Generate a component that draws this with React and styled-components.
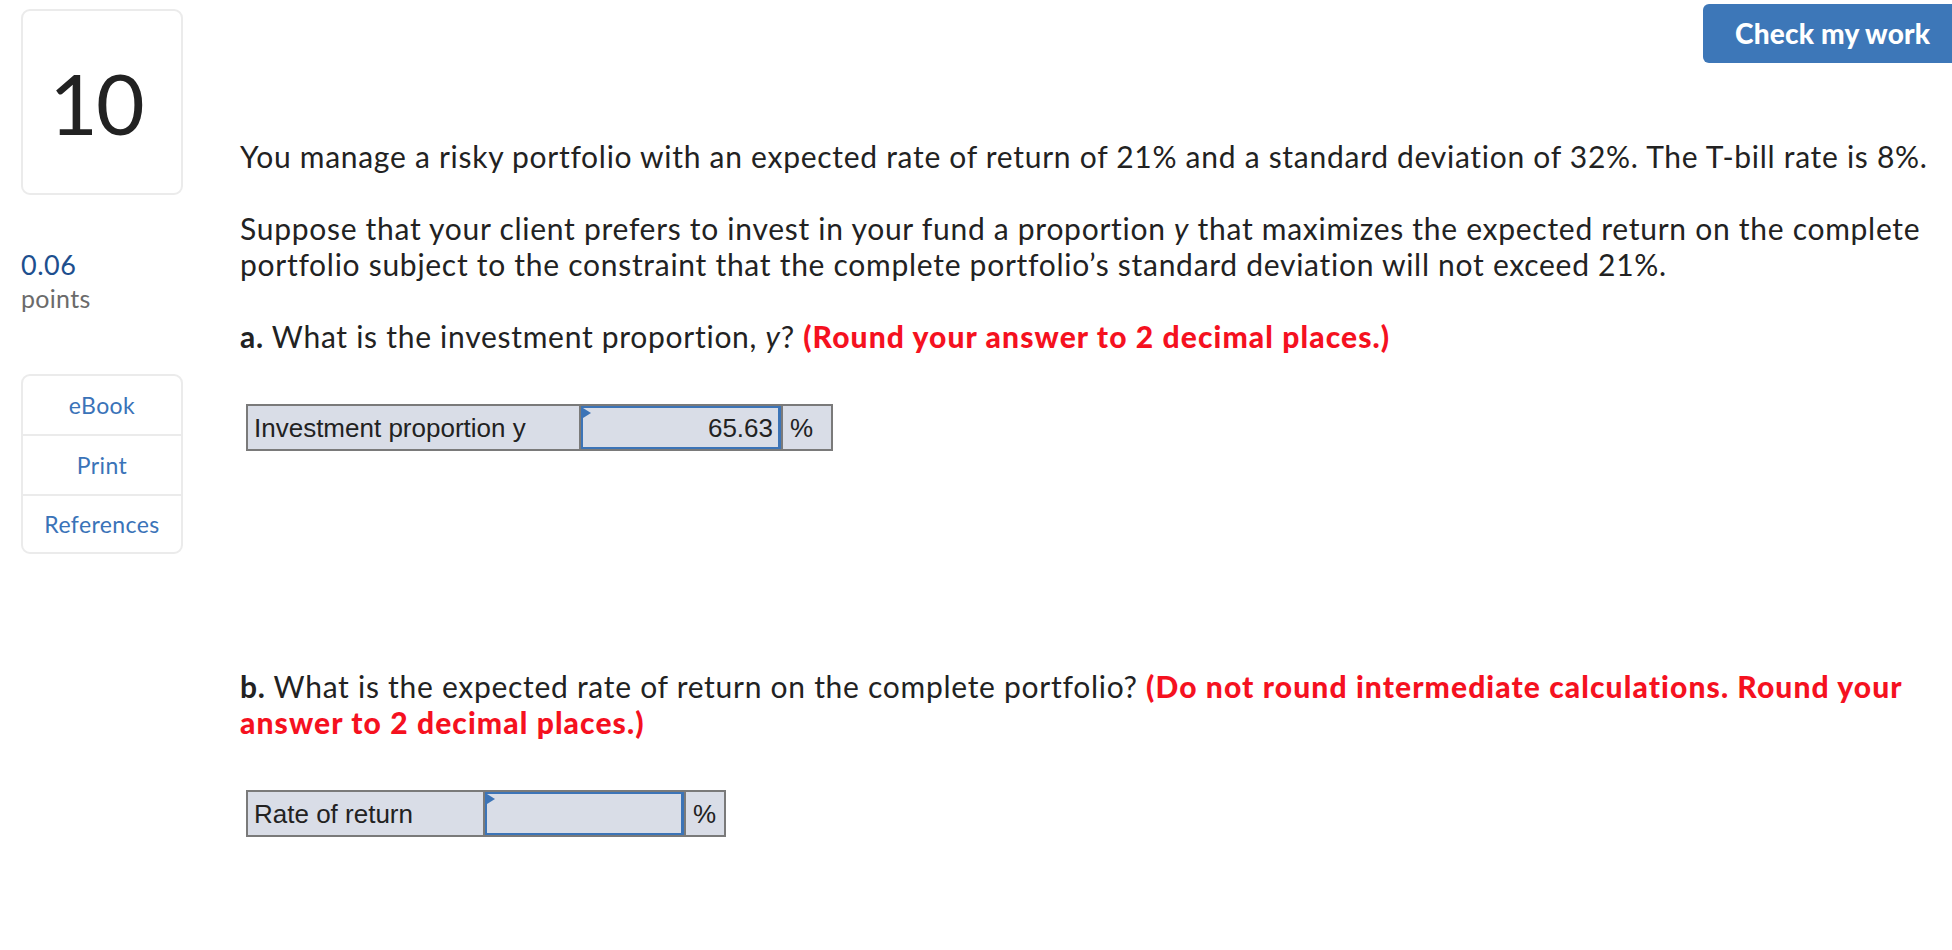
import React from 'react';
import styled, { createGlobalStyle } from 'styled-components';

const GlobalStyle = createGlobalStyle`
  html, body {
    margin: 0;
    padding: 0;
    background: #ffffff;
    overflow: hidden;
  }
  body {
    font-family: 'Lato', 'Noto Sans', sans-serif;
    color: #222222;
  }
`;

const Page = styled.div`
  display: flex;
  flex-direction: row;
  width: 1952px;
  min-height: 950px;
`;

const Sidebar = styled.aside`
  width: 162px;
  margin-left: 21px;
  padding-top: 9px;
  display: flex;
  flex-direction: column;
  flex-shrink: 0;
`;

const NumberCard = styled.div`
  height: 182px;
  border: 2px solid #ebebeb;
  border-radius: 9px;
  display: flex;
  align-items: center;
  justify-content: center;
  font-size: 84px;
  color: #222222;
  letter-spacing: -2px;
  padding-right: 12px;
`;

const Score = styled.div`
  margin-top: 55px;
  display: flex;
  flex-direction: column;
`;

const ScoreValue = styled.span`
  color: #1d4f8e;
  font-size: 27px;
  line-height: 30px;
  letter-spacing: 0.5px;
`;

const ScoreLabel = styled.span`
  color: #6b6b6b;
  font-size: 25px;
  line-height: 36px;
  letter-spacing: 0.3px;
`;

const ToolMenu = styled.nav`
  margin-top: 58px;
  border: 2px solid #ebebeb;
  border-radius: 9px;
  display: flex;
  flex-direction: column;
`;

const ToolLink = styled.a`
  height: ${(p) => p.$h}px;
  display: flex;
  align-items: center;
  justify-content: center;
  color: #3a73b8;
  font-size: 23px;
  letter-spacing: 0.4px;
  text-decoration: none;
  border-top: ${(p) => (p.$first ? 'none' : '2px solid #ebebeb')};
`;

const Main = styled.main`
  margin-left: 57px;
  width: 1705px;
  padding-top: 4px;
  display: flex;
  flex-direction: column;
`;

const TopBar = styled.div`
  display: flex;
  justify-content: flex-end;
`;

const CheckButton = styled.button`
  width: 262px;
  height: 59px;
  margin-right: -20px;
  border: none;
  border-radius: 6px;
  background: #3d77b8;
  color: #ffffff;
  font-family: 'Lato', sans-serif;
  font-weight: 900;
  font-size: 28px;
  letter-spacing: 0.2px;
  text-align: left;
  padding: 0 0 2px 32px;
`;

const Question = styled.div`
  margin-top: 75px;
  font-size: 30px;
  line-height: 36px;
  letter-spacing: 0.72px;
`;

const Paragraph = styled.p`
  margin: 0 0 ${(p) => p.$gap || 36}px;
`;

const Strong = styled.b`
  font-weight: 700;
`;

const Hint = styled.b`
  color: #f5111f;
  font-weight: 900;
  letter-spacing: 1.1px;
`;

const AnswerTable = styled.div`
  display: flex;
  width: fit-content;
  margin: 0 0 ${(p) => p.$gap || 0}px 6px;
  height: 47px;
  border: 2px solid #7a7a7a;
  background: #d9dde7;
  font-family: 'Liberation Sans', Arial, sans-serif;
  font-size: 26px;
  letter-spacing: 0;
  color: #222222;
  box-sizing: border-box;
`;

const LabelCell = styled.div`
  width: ${(p) => p.$w}px;
  display: flex;
  align-items: center;
  padding-left: 6px;
  box-sizing: border-box;
  border-right: 2px solid #7a7a7a;
`;

const InputCell = styled.div`
  position: relative;
  width: ${(p) => p.$w}px;
  display: flex;
  align-items: center;
  justify-content: flex-end;
  padding-right: 5px;
  box-sizing: border-box;
  border: 2px solid #3c74b7;
  border-right-width: 3px;
`;

const Flag = styled.span`
  position: absolute;
  top: 0;
  left: 0;
  width: 0;
  height: 0;
  border-top: 5px solid transparent;
  border-bottom: 5px solid transparent;
  border-left: 8px solid #3c74b7;
`;

const UnitCell = styled.div`
  display: flex;
  align-items: center;
  padding-left: 7px;
  box-sizing: border-box;
  border-left: 2px solid #7a7a7a;
`;

const Answer = ({ label, value, widths, gap }) => (
  <AnswerTable $gap={gap}>
    <LabelCell $w={widths[0]}>{label}</LabelCell>
    <InputCell $w={widths[1]}>
      <Flag />
      {value}
    </InputCell>
    <UnitCell style={{ width: widths[2] }}>%</UnitCell>
  </AnswerTable>
);

const App = () => {
  return (
    <Page>
      <GlobalStyle />
      <Sidebar>
        <NumberCard>10</NumberCard>
        <Score>
          <ScoreValue>0.06</ScoreValue>
          <ScoreLabel>points</ScoreLabel>
        </Score>
        <ToolMenu>
          <ToolLink $first $h={58}>eBook</ToolLink>
          <ToolLink $h={58}>Print</ToolLink>
          <ToolLink $h={56}>References</ToolLink>
        </ToolMenu>
      </Sidebar>
      <Main>
        <TopBar>
          <CheckButton>Check my work</CheckButton>
        </TopBar>
        <Question>
          <Paragraph>
            You manage a risky portfolio with an expected rate of return of 21% and a standard
            deviation of 32%. The T-bill rate is 8%.
          </Paragraph>
          <Paragraph>
            Suppose that your client prefers to invest in your fund a proportion <i>y</i> that
            maximizes the expected return on the complete portfolio subject to the constraint that
            the complete portfolio’s standard deviation will not exceed 21%.
          </Paragraph>
          <Paragraph $gap={50}>
            <Strong>a.</Strong> What is the investment proportion, <i>y</i>?{' '}
            <Hint>(Round your answer to 2 decimal places.)</Hint>
          </Paragraph>
          <Answer
            label="Investment proportion y"
            value="65.63"
            widths={[333, 200, 50]}
            gap={217}
          />
          <Paragraph $gap={50}>
            <Strong>b.</Strong> What is the expected rate of return on the complete portfolio?{' '}
            <Hint>
              (Do not round intermediate calculations. Round your answer to 2 decimal places.)
            </Hint>
          </Paragraph>
          <Answer label="Rate of return" value="" widths={[237, 199, 40]} />
        </Question>
      </Main>
    </Page>
  );
};

export default App;
